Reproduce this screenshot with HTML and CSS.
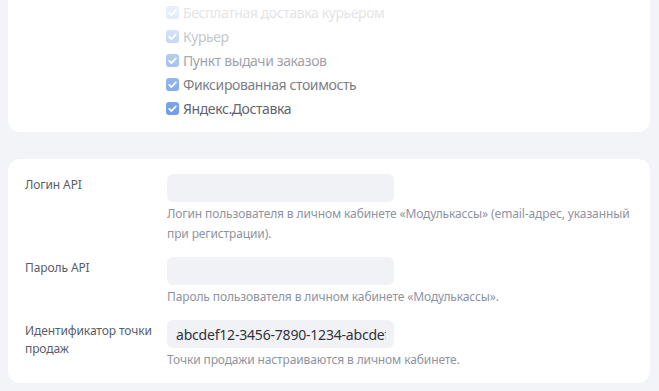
FILE: index.html
```html
<!DOCTYPE html>
<html lang="ru">
<head>
  <meta charset="UTF-8">
  <title>Модулькасса — настройки</title>
  <link rel="stylesheet" href="styles.css">
</head>
<body>
  <div class="card card-cut">
    <ul class="checks">
      <li><label><input type="checkbox" checked><span class="box"><svg viewBox="0 0 13 13"><path d="M3.2 6.8l2.3 2.2 4.3-4.6"/></svg></span>Бесплатная доставка курьером</label></li>
      <li><label><input type="checkbox" checked><span class="box"><svg viewBox="0 0 13 13"><path d="M3.2 6.8l2.3 2.2 4.3-4.6"/></svg></span>Курьер</label></li>
      <li><label><input type="checkbox" checked><span class="box"><svg viewBox="0 0 13 13"><path d="M3.2 6.8l2.3 2.2 4.3-4.6"/></svg></span>Пункт выдачи заказов</label></li>
      <li><label><input type="checkbox" checked><span class="box"><svg viewBox="0 0 13 13"><path d="M3.2 6.8l2.3 2.2 4.3-4.6"/></svg></span>Фиксированная стоимость</label></li>
      <li><label><input type="checkbox" checked><span class="box"><svg viewBox="0 0 13 13"><path d="M3.2 6.8l2.3 2.2 4.3-4.6"/></svg></span>Яндекс.Доставка</label></li>
    </ul>
    <div class="fade"></div>
  </div>

  <form class="card fields">
    <div class="row">
      <label class="row-label" for="login">Логин API</label>
      <div class="row-control">
        <input type="text" id="login">
        <p class="hint">Логин пользователя в личном кабинете «Модулькассы» (email-адрес, указанный при регистрации).</p>
      </div>
    </div>
    <div class="row">
      <label class="row-label" for="password">Пароль API</label>
      <div class="row-control">
        <input type="password" id="password">
        <p class="hint">Пароль пользователя в личном кабинете «Модулькассы».</p>
      </div>
    </div>
    <div class="row">
      <label class="row-label" for="point">Идентификатор точки продаж</label>
      <div class="row-control">
        <input type="text" id="point" value="abcdef12-3456-7890-1234-abcdefghijkl">
        <p class="hint">Точки продажи настраиваются в личном кабинете.</p>
      </div>
    </div>
  </form>
</body>
</html>
```

FILE: styles.css
```css
body {
  margin: 0;
  padding: 0 9px 0 8px;
  font-family: "Noto Sans", sans-serif;
  background-color: #f3f4f8;
  color: #454953;
}

.card {
  background-color: #fff;
  border-radius: 12px;
}

.card-cut {
  position: relative;
  border-radius: 0 0 12px 12px;
  padding: 0 0 12px 158px;
  margin-bottom: 27px;
}

/* whole block is greyed out, strongest at the top */
.fade {
  position: absolute;
  left: 0;
  right: 0;
  top: 0;
  bottom: 0;
  border-radius: inherit;
  background: linear-gradient(to bottom, rgba(255,255,255,0.86) 10%, rgba(255,255,255,0.68) 30%, rgba(255,255,255,0.5) 46%, rgba(255,255,255,0.3) 64%, rgba(255,255,255,0.14) 84%);
  pointer-events: none;
}

.checks {
  list-style: none;
  margin: 0;
  padding: 0;
}

.checks li {
  height: 24px;
  display: flex;
  align-items: center;
  font-size: 14px;
  letter-spacing: -0.4px;
}

.checks label {
  display: flex;
  align-items: center;
  gap: 4px;
}

.checks input {
  display: none;
}

.box {
  width: 13px;
  height: 13px;
  border-radius: 3px;
  background-color: #5a8fe5;
  display: flex;
}

.box svg {
  width: 13px;
  height: 13px;
  fill: none;
  stroke: #fff;
  stroke-width: 1.8;
  stroke-linecap: round;
  stroke-linejoin: round;
}

.fields {
  padding: 15px 17px 13px;
  display: flex;
  flex-direction: column;
  gap: 13px;
}

.row {
  display: flex;
}

.row-label {
  width: 142px;
  flex-shrink: 0;
  font-size: 12px;
  line-height: 18px;
  padding-top: 2px;
  color: #585d69;
  letter-spacing: -0.1px;
}

.row-control {
  flex: 1;
}

.row-control input {
  box-sizing: border-box;
  width: 227px;
  height: 28px;
  border: none;
  border-radius: 6px;
  background-color: #f1f2f6;
  padding: 0 8px 0 9px;
  font-family: inherit;
  font-size: 14px;
  letter-spacing: -0.2px;
  color: #2f333c;
  outline: none;
}

.hint {
  margin: 2px 0 0;
  font-size: 12px;
  line-height: 20px;
  letter-spacing: -0.12px;
  color: #8e93a0;
}
```
